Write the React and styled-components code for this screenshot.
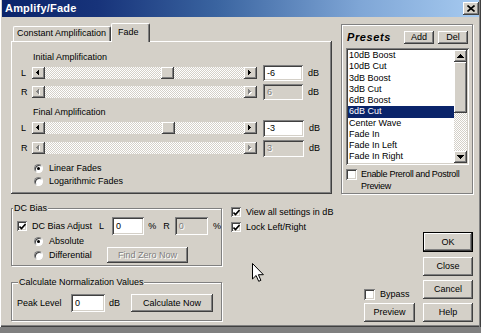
import React from "react";
import styled, { createGlobalStyle, css } from "styled-components";

const GlobalStyle = createGlobalStyle`
  html, body { margin: 0; padding: 0; background: #808080; }
  body { width: 481px; height: 333px; overflow: hidden; }
  *, *::before, *::after { box-sizing: border-box; }
`;

const raised = css`
  box-shadow: inset -1px -1px #404040, inset 1px 1px #ffffff,
    inset -2px -2px #808080, inset 2px 2px #d4d0c8;
`;
const sunken = css`
  box-shadow: inset 1px 1px #808080, inset -1px -1px #ffffff,
    inset 2px 2px #404040, inset -2px -2px #d4d0c8;
`;
const checker = css`
  background-color: #ffffff;
  background-image: conic-gradient(#d4d0c8 25%, #ffffff 0 50%, #d4d0c8 0 75%, #ffffff 0);
  background-size: 2px 2px;
`;
const greyText = css`
  color: #808080;
  text-shadow: 1px 1px #ffffff;
`;

const Window = styled.div`
  position: relative;
  width: 481px;
  height: 327px;
  background: #d4d0c8;
  font-family: "Liberation Sans", Arial, sans-serif;
  font-size: 9px;
  line-height: 11px;
  color: #000;
  padding: 0 2px;
  box-shadow: inset 1px 0 #ffffff, inset -1px 0 #404040, inset -2px 0 #808080,
    inset 0 -1px #404040, inset 0 -2px #808080;
`;

const TitleBar = styled.div`
  height: 17px;
  display: flex;
  align-items: center;
  justify-content: space-between;
  padding: 0 0 0 3px;
  background: linear-gradient(90deg, #0a246a 0%, #17337a 20%, #3a64a0 45%, #7fa6d6 75%, #a6caf0 100%);
`;
const TitleText = styled.span`
  color: #fff;
  font-weight: bold;
  font-size: 11px;
  line-height: 13px;
  letter-spacing: 0.2px;
`;
const CloseButton = styled.div`
  width: 16px;
  height: 13px;
  background: #d4d0c8;
  ${raised};
  display: flex;
  align-items: center;
  justify-content: center;
`;

const Content = styled.div`
  padding: 6px 0 0 9px;
`;
const TopRow = styled.div`
  display: flex;
  gap: 9px;
  height: 171px;
`;

/* ---------- tabs ---------- */
const TabControl = styled.div`
  width: 321px;
  height: 171px;
  display: flex;
  flex-direction: column;
`;
const TabStrip = styled.div`
  height: 18px;
  display: flex;
  align-items: flex-end;
  padding-left: 2px;
`;
const Tab = styled.div`
  position: relative;
  z-index: ${(p) => (p.$active ? 2 : 1)};
  width: ${(p) => p.$w}px;
  height: ${(p) => (p.$active ? 19 : 15)}px;
  margin-bottom: ${(p) => (p.$active ? -1 : 0)}px;
  padding: ${(p) => (p.$active ? 3 : 1)}px 0 0 ${(p) => p.$pad}px;
  background: #d4d0c8;
  border-top: 1px solid #fff;
  border-left: 1px solid #fff;
  border-right: 1px solid #404040;
  border-radius: 2px 2px 0 0;
  box-shadow: inset -1px 0 #808080;
  white-space: nowrap;
`;
const TabPanel = styled.div`
  flex: 1;
  background: #d4d0c8;
  ${raised};
  padding: 11px 0 0 10px;
`;
const Heading = styled.div`
  margin: ${(p) => p.$mt || 0}px 0 0 12px;
  height: 11px;
`;
const AmpRow = styled.div`
  display: flex;
  align-items: center;
  height: 18px;
  margin-top: ${(p) => p.$mt || 0}px;
`;
const RowLabel = styled.span`
  width: 11px;
`;
const Unit = styled.span`
  margin-left: 5px;
`;

/* ---------- slider (scrollbar style) ---------- */
const Scroll = styled.div`
  display: flex;
  width: ${(p) => p.$w}px;
  height: 12px;
`;
const ArrowBtn = styled.div`
  width: 13px;
  height: 12px;
  background: #d4d0c8;
  ${raised};
  display: flex;
  align-items: center;
  justify-content: center;
`;
const Track = styled.div`
  position: relative;
  flex: 1;
  ${checker};
`;
const Thumb = styled.div`
  position: absolute;
  top: 0;
  width: 13px;
  height: 12px;
  background: #d4d0c8;
  ${raised};
`;

const Edit = styled.div`
  width: ${(p) => p.$w}px;
  height: ${(p) => p.$h || 16}px;
  margin-left: ${(p) => p.$ml || 0}px;
  padding: 0 0 0 4px;
  display: flex;
  align-items: center;
  background: ${(p) => (p.$disabled ? "#d4d0c8" : "#ffffff")};
  ${sunken};
  ${(p) => p.$disabled && greyText};
`;

/* ---------- radio / checkbox ---------- */
const OptionRow = styled.label`
  display: flex;
  align-items: center;
  height: ${(p) => p.$h || 12}px;
  margin: ${(p) => p.$mt || 0}px 0 0 ${(p) => p.$ml || 0}px;
  white-space: nowrap;
`;
const RadioDot = styled.span`
  width: 9px;
  height: 9px;
  margin-right: 6px;
  border-radius: 50%;
  background: #fff;
  border: 1px solid;
  border-color: #808080 #ffffff #ffffff #808080;
  box-shadow: inset 1px 1px #404040;
  display: flex;
  align-items: center;
  justify-content: center;
  &::after {
    content: "";
    width: 3px;
    height: 3px;
    border-radius: 50%;
    background: ${(p) => (p.$on ? "#000" : "transparent")};
  }
`;
const CheckBox = styled.span`
  flex: none;
  width: ${(p) => p.$s || 10}px;
  height: ${(p) => p.$s || 10}px;
  margin-right: ${(p) => p.$gap || 5}px;
  margin-top: ${(p) => p.$mt || 0}px;
  background: #fff;
  ${sunken};
  display: flex;
  align-items: center;
  justify-content: center;
`;

/* ---------- presets ---------- */
const etched = css`
  border: 1px solid #808080;
  box-shadow: inset 1px 1px #ffffff, 1px 1px #ffffff;
`;
const PresetsFrame = styled.div`
  width: 132px;
  height: 170px;
  margin-top: 1px;
  ${etched};
  padding: 0 3px 0 4px;
  display: flex;
  flex-direction: column;
`;
const PresetsHeader = styled.div`
  display: flex;
  align-items: center;
  height: 13px;
  margin-top: 6px;
  padding-right: 1px;
`;
const PresetsTitle = styled.span`
  flex: 1;
  margin-left: 1px;
  font-weight: bold;
  font-style: italic;
  font-size: 11px;
  letter-spacing: 0.6px;
`;
const Button = styled.div`
  width: ${(p) => p.$w}px;
  height: ${(p) => p.$h || 18}px;
  margin: ${(p) => p.$m || 0};
  background: #d4d0c8;
  ${raised};
  display: flex;
  align-items: center;
  justify-content: center;
  white-space: nowrap;
  ${(p) => p.$disabled && greyText};
  ${(p) =>
    p.$default &&
    css`
      border: 1px solid #000;
    `};
`;
const ListBox = styled.div`
  display: flex;
  height: 117px;
  margin-top: 4px;
  padding: 2px;
  background: #fff;
  ${sunken};
`;
const ListItems = styled.div`
  flex: 1;
  overflow: hidden;
`;
const ListItem = styled.div`
  height: 11.25px;
  line-height: 11.25px;
  padding-left: 1px;
  white-space: nowrap;
  background: ${(p) => (p.$sel ? "#0a246a" : "transparent")};
  color: ${(p) => (p.$sel ? "#fff" : "#000")};
`;
const VScroll = styled.div`
  width: 13px;
  display: flex;
  flex-direction: column;
`;
const VArrow = styled.div`
  height: 12px;
  background: #d4d0c8;
  ${raised};
  display: flex;
  align-items: center;
  justify-content: center;
`;
const VThumb = styled.div`
  height: 51px;
  background: #d4d0c8;
  ${raised};
`;
const VTrack = styled.div`
  flex: 1;
  ${checker};
`;
const PrerollRow = styled.div`
  display: flex;
  align-items: flex-start;
  margin-top: 3px;
  line-height: 12px;
`;
const PrerollText = styled.span`
  letter-spacing: -0.3px;
  white-space: nowrap;
`;

/* ---------- bottom ---------- */
const BottomArea = styled.div`
  display: flex;
  height: 131px;
`;
const LeftCol = styled.div`
  width: 211px;
  display: flex;
  flex-direction: column;
`;
const Group = styled.fieldset`
  margin: ${(p) => p.$mt}px 0 0 0;
  padding: 0 0 0 5px;
  height: ${(p) => p.$h}px;
  min-inline-size: 0;
  border: 1px solid #808080;
  box-shadow: inset 1px 1px #ffffff, 1px 1px #ffffff;
`;
const Legend = styled.legend`
  margin-left: ${(p) => p.$ml}px;
  padding: 0 1px;
  line-height: 11px;
  background: #d4d0c8;
`;
const DCRow = styled.div`
  display: flex;
  align-items: center;
  height: 18px;
  margin-top: 3px;
  white-space: nowrap;
`;
const FieldLabel = styled.span`
  width: ${(p) => (p.$w ? `${p.$w}px` : "auto")};
  margin-left: ${(p) => p.$ml || 0}px;
  flex: none;
`;
const RadioButtonRow = styled.div`
  display: flex;
  align-items: center;
  justify-content: space-between;
  height: 16px;
  padding-right: 33px;
`;
const PeakRow = styled.div`
  display: flex;
  align-items: center;
  height: 18px;
  margin-top: 6px;
  white-space: nowrap;
`;
const MiddleCol = styled.div`
  width: 133px;
  margin-left: 9px;
  padding-top: 12px;
`;
const RightCol = styled.div`
  display: flex;
  align-items: flex-start;
`;
const BypassCol = styled.div`
  width: 51px;
  padding-top: 94px;
  display: flex;
  flex-direction: column;
`;
const ButtonCol = styled.div`
  width: 50px;
  margin-left: 8px;
  padding-top: 38px;
  display: flex;
  flex-direction: column;
`;
const Cursor = styled.svg`
  position: absolute;
  left: 252px;
  top: 263px;
`;

/* ---------- icons ---------- */
const TriH = ({ dir, off }) => {
  const d = dir === "left" ? "M3 0v7L0 3.5z" : "M0 0v7l3-3.5z";
  return (
    <svg width="5" height="8" viewBox="0 0 5 8" shapeRendering="crispEdges">
      {off && <path transform="translate(1 1)" d={d} fill="#fff" />}
      <path d={d} fill={off ? "#808080" : "#000"} />
    </svg>
  );
};
const TriV = ({ dir }) => (
  <svg width="7" height="4" viewBox="0 0 7 4" shapeRendering="crispEdges">
    <path d={dir === "up" ? "M0 4h7L3.5 0z" : "M0 0h7L3.5 4z"} fill="#000" />
  </svg>
);
const Check = () => (
  <svg width="7" height="7" viewBox="0 0 7 7">
    <path d="M0.5 3.5l2 2 4-4.5" stroke="#000" strokeWidth="1.6" fill="none" />
  </svg>
);
const CloseX = () => (
  <svg width="8" height="7" viewBox="0 0 8 7">
    <path d="M0.5 0.5l7 6M7.5 0.5l-7 6" stroke="#000" strokeWidth="1.6" />
  </svg>
);

const Slider = ({ pos, disabled }) => (
  <Scroll $w={225}>
    <ArrowBtn>
      <TriH dir="left" off={disabled} />
    </ArrowBtn>
    <Track>{!disabled && <Thumb style={{ left: `${pos}px` }} />}</Track>
    <ArrowBtn>
      <TriH dir="right" off={disabled} />
    </ArrowBtn>
  </Scroll>
);

const presets = [
  "10dB Boost",
  "10dB Cut",
  "3dB Boost",
  "3dB Cut",
  "6dB Boost",
  "6dB Cut",
  "Center Wave",
  "Fade In",
  "Fade In Left",
  "Fade In Right",
  "Fade Out",
];

export default function App() {
  return (
    <>
      <GlobalStyle />
      <Window>
        <TitleBar>
          <TitleText>Amplify/Fade</TitleText>
          <CloseButton>
            <CloseX />
          </CloseButton>
        </TitleBar>
        <Content>
          <TopRow>
            <TabControl>
              <TabStrip>
                <Tab $w={98} $pad={3}>
                  Constant Amplification
                </Tab>
                <Tab $w={39} $pad={6} $active>
                  Fade
                </Tab>
              </TabStrip>
              <TabPanel>
                <Heading>Initial Amplification</Heading>
                <AmpRow $mt={1}>
                  <RowLabel>L</RowLabel>
                  <Slider pos={116} />
                  <Edit $w={40} $ml={6}>-6</Edit>
                  <Unit>dB</Unit>
                </AmpRow>
                <AmpRow $mt={1}>
                  <RowLabel>R</RowLabel>
                  <Slider disabled />
                  <Edit $w={40} $ml={6} $disabled>6</Edit>
                  <Unit>dB</Unit>
                </AmpRow>
                <Heading $mt={6}>Final Amplification</Heading>
                <AmpRow $mt={1}>
                  <RowLabel>L</RowLabel>
                  <Slider pos={117} />
                  <Edit $w={41} $h={17} $ml={6}>-3</Edit>
                  <Unit>dB</Unit>
                </AmpRow>
                <AmpRow $mt={2}>
                  <RowLabel>R</RowLabel>
                  <Slider disabled />
                  <Edit $w={41} $h={17} $ml={6} $disabled>3</Edit>
                  <Unit>dB</Unit>
                </AmpRow>
                <OptionRow $mt={5} $ml={13}>
                  <RadioDot $on />
                  Linear Fades
                </OptionRow>
                <OptionRow $mt={1} $ml={13}>
                  <RadioDot />
                  Logarithmic Fades
                </OptionRow>
              </TabPanel>
            </TabControl>

            <PresetsFrame>
              <PresetsHeader>
                <PresetsTitle>Presets</PresetsTitle>
                <Button $w={30} $h={13}>Add</Button>
                <Button $w={30} $h={13} $m="0 0 0 4px">Del</Button>
              </PresetsHeader>
              <ListBox>
                <ListItems>
                  {presets.map((p) => (
                    <ListItem key={p} $sel={p === "6dB Cut"}>
                      {p}
                    </ListItem>
                  ))}
                </ListItems>
                <VScroll>
                  <VArrow>
                    <TriV dir="up" />
                  </VArrow>
                  <VThumb />
                  <VTrack />
                  <VArrow>
                    <TriV dir="down" />
                  </VArrow>
                </VScroll>
              </ListBox>
              <PrerollRow>
                <CheckBox $s={11} $gap={4} $mt={1} />
                <PrerollText>
                  Enable Preroll and Postroll
                  <br />
                  Preview
                </PrerollText>
              </PrerollRow>
            </PresetsFrame>
          </TopRow>

          <BottomArea>
            <LeftCol>
              <Group $mt={9} $h={63}>
                <Legend $ml={-4}>DC Bias</Legend>
                <DCRow>
                  <CheckBox>
                    <Check />
                  </CheckBox>
                  <FieldLabel $w={67}>DC Bias Adjust</FieldLabel>
                  <FieldLabel>L</FieldLabel>
                  <Edit $w={34} $h={18} $ml={8}>0</Edit>
                  <FieldLabel $w={15} $ml={4}>%</FieldLabel>
                  <FieldLabel>R</FieldLabel>
                  <Edit $w={35} $h={18} $ml={5} $disabled>0</Edit>
                  <FieldLabel $ml={5}>%</FieldLabel>
                </DCRow>
                <OptionRow $ml={17}>
                  <RadioDot $on />
                  Absolute
                </OptionRow>
                <RadioButtonRow>
                  <OptionRow $ml={17}>
                    <RadioDot />
                    Differential
                  </OptionRow>
                  <Button $w={81} $h={16} $disabled>
                    Find Zero Now
                  </Button>
                </RadioButtonRow>
              </Group>
              <Group $mt={11} $h={44}>
                <Legend $ml={1}>Calculate Normalization Values</Legend>
                <PeakRow>
                  <FieldLabel $w={54}>Peak Level</FieldLabel>
                  <Edit $w={34} $h={18}>0</Edit>
                  <FieldLabel $w={22} $ml={4}>dB</FieldLabel>
                  <Button $w={82} $h={18}>Calculate Now</Button>
                </PeakRow>
              </Group>
            </LeftCol>

            <MiddleCol>
              <OptionRow>
                <CheckBox>
                  <Check />
                </CheckBox>
                View all settings in dB
              </OptionRow>
              <OptionRow $mt={3}>
                <CheckBox>
                  <Check />
                </CheckBox>
                Lock Left/Right
              </OptionRow>
            </MiddleCol>

            <RightCol>
              <BypassCol>
                <OptionRow $h={12}>
                  <CheckBox $s={11} $gap={5} />
                  Bypass
                </OptionRow>
                <Button $w={51} $h={19} $m="3px 0 0 0">Preview</Button>
              </BypassCol>
              <ButtonCol>
                <Button $w={50} $h={20} $default>OK</Button>
                <Button $w={50} $h={19} $m="5px 0 0 0">Close</Button>
                <Button $w={50} $h={19} $m="4px 0 0 0">Cancel</Button>
                <Button $w={50} $h={19} $m="4px 0 0 0">Help</Button>
              </ButtonCol>
            </RightCol>
          </BottomArea>
        </Content>

        <Cursor width="12" height="19" viewBox="0 0 12 19">
          <path
            d="M0.5 0.5v15.5l3.6-3.5 2.6 5.8 2.2-1-2.5-5.6h5z"
            fill="#fff"
            stroke="#000"
            strokeWidth="1"
          />
        </Cursor>
      </Window>
    </>
  );
}
